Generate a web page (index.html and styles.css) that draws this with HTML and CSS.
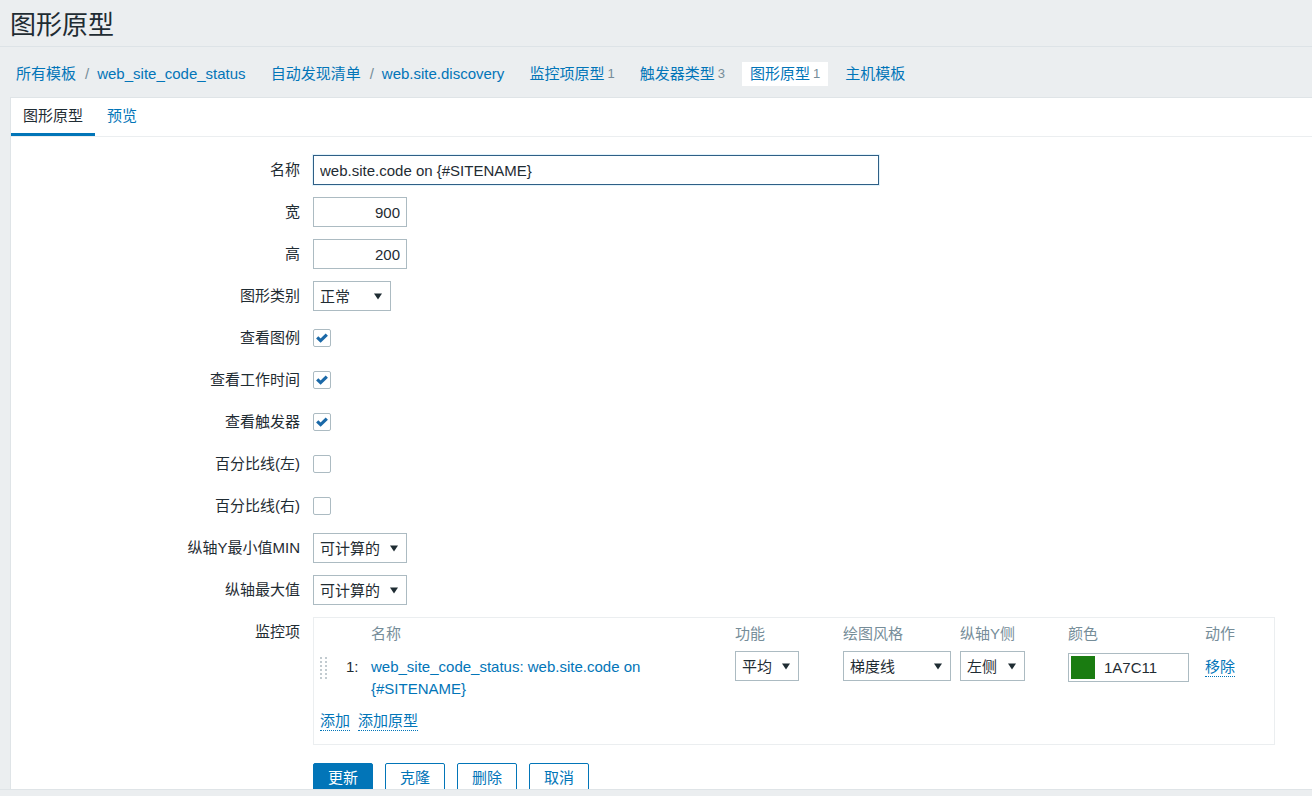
FILE: index.html
```html
<!DOCTYPE html>
<html lang="zh-CN">
<head>
<meta charset="utf-8">
<title>图形原型</title>
<link rel="stylesheet" href="styles.css">
</head>
<body>
<header class="page-header">
  <h1 class="page-title">图形原型</h1>
</header>

<nav class="breadcrumbs">
  <ul class="crumb-list">
    <li class="crumb"><a class="link">所有模板</a><span class="sep">/</span><a class="link">web_site_code_status</a></li>
    <li class="crumb"><a class="link">自动发现清单</a><span class="sep">/</span><a class="link">web.site.discovery</a></li>
    <li class="crumb"><a class="link">监控项原型</a><span class="count">1</span></li>
    <li class="crumb"><a class="link">触发器类型</a><span class="count">3</span></li>
    <li class="crumb crumb-selected"><a class="link">图形原型</a><span class="count">1</span></li>
    <li class="crumb"><a class="link">主机模板</a></li>
  </ul>
</nav>

<main class="panel">
  <ul class="tabs">
    <li class="tab tab-active">图形原型</li>
    <li class="tab">预览</li>
  </ul>

  <form class="form">
    <label class="form-label">名称</label>
    <div class="form-field">
      <input class="input input-name input-focus" type="text" value="web.site.code on {#SITENAME}">
    </div>

    <label class="form-label">宽</label>
    <div class="form-field"><input class="input input-num" type="text" value="900"></div>

    <label class="form-label">高</label>
    <div class="form-field"><input class="input input-num" type="text" value="200"></div>

    <label class="form-label">图形类别</label>
    <div class="form-field">
      <div class="select select-type"><span>正常</span><svg class="arrow" width="8" height="7" viewBox="0 0 8 7"><path d="M0 0.5h8L4 6.5z" fill="#1f2c33"/></svg></div>
    </div>

    <label class="form-label">查看图例</label>
    <div class="form-field form-check">
      <span class="checkbox"><svg width="18" height="18" viewBox="0 0 18 18"><path d="M4.2 8.4 7.6 11.6 13.8 5.6" fill="none" stroke="#1b69a8" stroke-width="3.2"/></svg></span>
    </div>

    <label class="form-label">查看工作时间</label>
    <div class="form-field form-check">
      <span class="checkbox"><svg width="18" height="18" viewBox="0 0 18 18"><path d="M4.2 8.4 7.6 11.6 13.8 5.6" fill="none" stroke="#1b69a8" stroke-width="3.2"/></svg></span>
    </div>

    <label class="form-label">查看触发器</label>
    <div class="form-field form-check">
      <span class="checkbox"><svg width="18" height="18" viewBox="0 0 18 18"><path d="M4.2 8.4 7.6 11.6 13.8 5.6" fill="none" stroke="#1b69a8" stroke-width="3.2"/></svg></span>
    </div>

    <label class="form-label">百分比线(左)</label>
    <div class="form-field form-check"><span class="checkbox"></span></div>

    <label class="form-label">百分比线(右)</label>
    <div class="form-field form-check"><span class="checkbox"></span></div>

    <label class="form-label">纵轴Y最小值MIN</label>
    <div class="form-field">
      <div class="select select-calc"><span>可计算的</span><svg class="arrow" width="8" height="7" viewBox="0 0 8 7"><path d="M0 0.5h8L4 6.5z" fill="#1f2c33"/></svg></div>
    </div>

    <label class="form-label">纵轴最大值</label>
    <div class="form-field">
      <div class="select select-calc"><span>可计算的</span><svg class="arrow" width="8" height="7" viewBox="0 0 8 7"><path d="M0 0.5h8L4 6.5z" fill="#1f2c33"/></svg></div>
    </div>

    <label class="form-label">监控项</label>
    <div class="form-field">
      <div class="items">
        <div class="th"></div>
        <div class="th"></div>
        <div class="th">名称</div>
        <div class="th">功能</div>
        <div class="th">绘图风格</div>
        <div class="th">纵轴Y侧</div>
        <div class="th">颜色</div>
        <div class="th">动作</div>

        <div class="td td-handle">
          <svg width="8" height="22" viewBox="0 0 8 22">
            <g fill="#c2cbd0">
              <rect x="0" y="0" width="2" height="2"/><rect x="5" y="0" width="2" height="2"/>
              <rect x="0" y="4" width="2" height="2"/><rect x="5" y="4" width="2" height="2"/>
              <rect x="0" y="8" width="2" height="2"/><rect x="5" y="8" width="2" height="2"/>
              <rect x="0" y="12" width="2" height="2"/><rect x="5" y="12" width="2" height="2"/>
              <rect x="0" y="16" width="2" height="2"/><rect x="5" y="16" width="2" height="2"/>
              <rect x="0" y="20" width="2" height="2"/><rect x="5" y="20" width="2" height="2"/>
            </g>
          </svg>
        </div>
        <div class="td td-text">1:</div>
        <div class="td td-text td-name"><a class="link">web_site_code_status: web.site.code on {#SITENAME}</a></div>
        <div class="td">
          <div class="select select-func"><span>平均</span><svg class="arrow" width="8" height="7" viewBox="0 0 8 7"><path d="M0 0.5h8L4 6.5z" fill="#1f2c33"/></svg></div>
        </div>
        <div class="td">
          <div class="select select-style"><span>梯度线</span><svg class="arrow" width="8" height="7" viewBox="0 0 8 7"><path d="M0 0.5h8L4 6.5z" fill="#1f2c33"/></svg></div>
        </div>
        <div class="td">
          <div class="select select-axis"><span>左侧</span><svg class="arrow" width="8" height="7" viewBox="0 0 8 7"><path d="M0 0.5h8L4 6.5z" fill="#1f2c33"/></svg></div>
        </div>
        <div class="td">
          <div class="color-input"><span class="swatch"></span><span class="color-code">1A7C11</span></div>
        </div>
        <div class="td td-text"><a class="link link-dotted">移除</a></div>

        <div class="add-row">
          <a class="link link-dotted">添加</a>
          <a class="link link-dotted">添加原型</a>
        </div>
      </div>
    </div>

    <div class="form-buttons">
      <button class="btn btn-primary" type="button">更新</button>
      <button class="btn btn-alt" type="button">克隆</button>
      <button class="btn btn-alt" type="button">删除</button>
      <button class="btn btn-alt" type="button">取消</button>
    </div>
  </form>
</main>

<div class="footer-strip"></div>
</body>
</html>
```

FILE: styles.css
```css
html, body {
  margin: 0;
  padding: 0;
  overflow: hidden;
  height: 100%;
}

body {
  background: #ebeef0;
  color: #1f2c33;
  font-family: "Liberation Sans", Arial, "Noto Sans CJK SC", sans-serif;
  font-size: 15px;
  line-height: 22px;
}

input, button {
  font: inherit;
  color: inherit;
}

.link {
  color: #0275b8;
  text-decoration: none;
  cursor: pointer;
}

.link-dotted {
  border-bottom: 1px dotted #0275b8;
  line-height: 18px;
  display: inline-block;
}

/* header */
.page-header {
  box-sizing: border-box;
  height: 47px;
  border-bottom: 1px solid #dde3e7;
}

.page-title {
  margin: 0;
  padding: 8px 0 0 10px;
  font-size: 26px;
  line-height: 34px;
  font-weight: normal;
  color: #1f2c33;
}

/* breadcrumbs */
.breadcrumbs {
  height: 50px;
  padding: 15px 0 0 8px;
  box-sizing: border-box;
}

.crumb-list {
  list-style: none;
  margin: 0;
  padding: 0;
  display: flex;
  gap: 9px;
}

.crumb {
  height: 24px;
  line-height: 24px;
  padding: 0 8px;
  display: flex;
  align-items: center;
  white-space: nowrap;
}

.crumb-selected {
  background: #ffffff;
}

.sep {
  color: #768d99;
  margin: 0 8px 0 9px;
}

.count {
  color: #768d99;
  font-size: 13px;
  margin-left: 3px;
}

/* panel */
.panel {
  margin-left: 10px;
  background: #ffffff;
  border-top: 1px solid #dfe4e7;
  border-left: 1px solid #dfe4e7;
  padding-bottom: 60px;
}

.tabs {
  list-style: none;
  margin: 0;
  padding: 0;
  display: flex;
  border-bottom: 1px solid #ebeef0;
  height: 38px;
}

.tab {
  height: 38px;
  box-sizing: border-box;
  padding: 6px 12px 0;
  line-height: 24px;
  color: #0275b8;
  border-bottom: 3px solid transparent;
}

.tab-active {
  color: #1f2c33;
  border-bottom-color: #0275b8;
}

/* form */
.form {
  display: grid;
  grid-template-columns: 289px 1fr;
  column-gap: 13px;
  row-gap: 12px;
  padding-top: 18px;
  align-items: start;
}

.form-label {
  text-align: right;
  line-height: 30px;
  height: 30px;
  white-space: nowrap;
}

.form-field {
  min-height: 30px;
}

.form-check {
  display: flex;
  align-items: center;
  height: 30px;
}

.input {
  height: 30px;
  box-sizing: border-box;
  border: 1px solid #acbbc2;
  padding: 0 6px;
  background: #ffffff;
  outline: none;
  display: block;
}

.input-name {
  width: 566px;
}

.input-focus {
  border-color: #2f5f86;
  box-shadow: 0 0 0 1px #e3f3fb;
}

.input-num {
  width: 94px;
  text-align: right;
}

.select {
  height: 30px;
  box-sizing: border-box;
  border: 1px solid #acbbc2;
  padding: 0 8px 0 6px;
  display: flex;
  align-items: center;
  justify-content: space-between;
  background: #ffffff;
  white-space: nowrap;
}

.select span {
  line-height: 28px;
  padding-top: 1px;
}

.arrow {
  flex: none;
  margin-left: 8px;
}

.select-type { width: 78px; }
.select-calc { width: 94px; }
.select-func { width: 64px; }
.select-style { width: 108px; }
.select-axis { width: 65px; }

.checkbox {
  width: 18px;
  height: 18px;
  box-sizing: border-box;
  border: 1px solid #acbbc2;
  border-radius: 2px;
  display: flex;
  align-items: center;
  justify-content: center;
  background: #ffffff;
  margin-top: -1px;
}

.checkbox svg {
  display: block;
  flex: none;
}

/* items table */
.items {
  width: 962px;
  box-sizing: border-box;
  border: 1px solid #ebeef0;
  padding: 5px 6px 12px 6px;
  display: grid;
  grid-template-columns: 26px 25px 364px 108px 117px 108px 137px 1fr;
  row-gap: 6px;
  align-items: start;
}

.th {
  color: #768d99;
  line-height: 22px;
  white-space: nowrap;
}

.td-handle {
  padding-top: 6px;
}

.td-handle svg {
  display: block;
}

.td-text {
  padding-top: 5px;
  line-height: 22px;
}

.td-name {
  padding-right: 24px;
}

.color-input {
  margin-top: 2px;
  width: 121px;
  height: 29px;
  box-sizing: border-box;
  border: 1px solid #acbbc2;
  padding: 2px;
  display: flex;
  align-items: center;
  gap: 9px;
}

.swatch {
  width: 24px;
  height: 23px;
  background: #1a7c11;
  flex: none;
}

.color-code {
  line-height: 22px;
}

.add-row {
  grid-column: 1 / -1;
  margin-top: 4px;
  display: flex;
  gap: 8px;
  height: 22px;
  align-items: center;
}

/* buttons */
.form-buttons {
  grid-column: 2;
  margin-top: 6px;
  display: flex;
  gap: 12px;
}

.btn {
  width: 60px;
  height: 30px;
  box-sizing: border-box;
  border: 1px solid #0275b8;
  border-radius: 2px;
  padding: 0;
  line-height: 28px;
  cursor: pointer;
}

.btn-primary {
  background: #0275b8;
  color: #ffffff;
}

.btn-alt {
  background: #ffffff;
  color: #0275b8;
}

.footer-strip {
  position: fixed;
  left: 0;
  right: 0;
  bottom: 0;
  height: 6px;
  background: #ebeef0;
  border-top: 1px solid #dfe4e7;
}
```
